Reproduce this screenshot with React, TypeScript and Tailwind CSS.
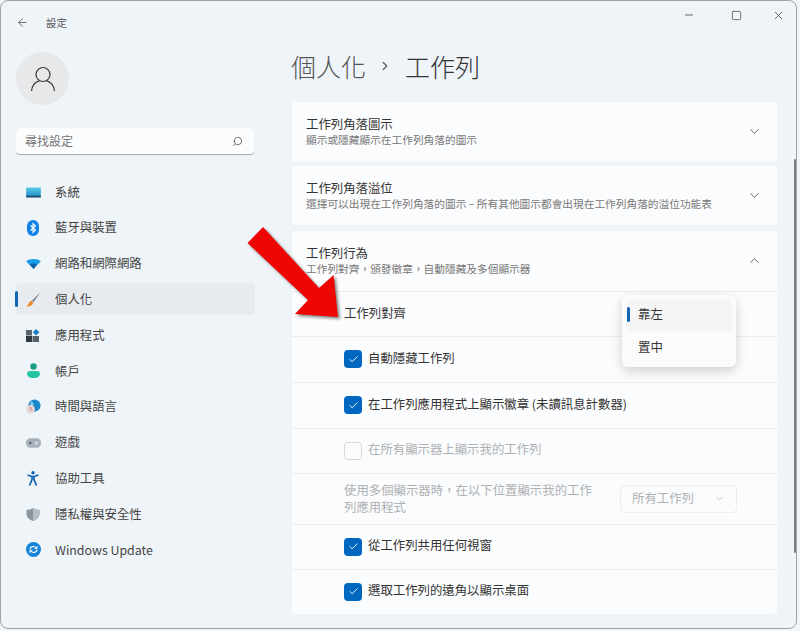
import { ChevronDown, ChevronRight, ChevronUp, Minus, Square, X, ArrowLeft, Search, Check } from "lucide-react";
import type { ReactNode } from "react";

const cjk = "font-['Noto_Sans_CJK_TC','Noto_Sans',sans-serif]";

function SystemIcon() {
  return (
    <svg viewBox="0 0 16 12" className="h-[11px] w-[15px]">
      <defs>
        <linearGradient id="sys" x1="0" y1="0" x2="0" y2="1">
          <stop offset="0%" stopColor="#5ecbea" />
          <stop offset="100%" stopColor="#1a8fc4" />
        </linearGradient>
      </defs>
      <rect x="0" y="0.5" width="16" height="10" fill="url(#sys)" />
      <rect x="0" y="9.5" width="16" height="2" fill="#1d4f73" />
    </svg>
  );
}

function BluetoothIcon() {
  return (
    <svg viewBox="0 0 14 16" className="h-[16px] w-[14px]">
      <rect x="1" y="0" width="12" height="16" rx="6" fill="#0f80e6" />
      <path d="M4.5 5.5 9.5 10 7 12.5V3.5L9.5 6 4.5 10.5" fill="none" stroke="#fff" strokeWidth="1.1" />
    </svg>
  );
}

function WifiIcon() {
  return (
    <svg viewBox="0 0 16 12" className="h-[11px] w-[15px]">
      <path d="M0 3.5C4 .3 12 .3 16 3.5L8 12Z" fill="#1a9be6" />
      <path d="M4.2 7C6.2 5.6 9.8 5.6 11.8 7L8 12Z" fill="#0b5fa8" />
    </svg>
  );
}

function BrushIcon() {
  return (
    <svg viewBox="0 0 14 14" className="h-[15px] w-[15px]">
      <path d="M13.5 .5 5.5 8 7 9.5Z" fill="#7a8690" />
      <path d="M5 8.2C3 8.5 3 11 .5 13.5 3.5 13.5 6.5 12.5 6.8 10Z" fill="#ef8a2c" />
    </svg>
  );
}

function AppsIcon() {
  return (
    <svg viewBox="0 0 14 13" className="h-[13px] w-[14px]">
      <rect x="0" y="1" width="6" height="5.5" fill="#5c6670" />
      <rect x="0" y="7" width="6" height="6" fill="#2e3640" />
      <rect x="6.5" y="7" width="6.5" height="6" fill="#59626b" />
      <path d="M10 0 13.5 3.3 10 6.6 6.8 3.3Z" fill="#1f7fc4" />
    </svg>
  );
}

function AccountIcon() {
  return (
    <svg viewBox="0 0 12 14" className="h-[15px] w-[13px]">
      <circle cx="6" cy="3.2" r="3" fill="#1b9e84" />
      <path d="M0 10C0 8 1.5 7.4 3 7.4H9C10.5 7.4 12 8 12 10 12 12.5 9.5 14 6 14S0 12.5 0 10Z" fill="#25c2a0" />
    </svg>
  );
}

function TimeIcon() {
  return (
    <svg viewBox="0 0 16 16" className="h-[15px] w-[15px]">
      <circle cx="9" cy="7" r="6.5" fill="#1b86c9" />
      <path d="M5 2.5C8 3 9 6 7 8 5 9 4 6 5 2.5Z" fill="#7ad0ee" />
      <circle cx="5" cy="11" r="4.5" fill="#e6d4d6" />
      <path d="M5 8.5V11L6.5 12" stroke="#b0606a" fill="none" strokeWidth="0.8" />
    </svg>
  );
}

function GamingIcon() {
  return (
    <svg viewBox="0 0 16 10" className="h-[10px] w-[15px]">
      <rect x="0" y="0" width="16" height="10" rx="4.5" fill="#a5b0ba" />
      <circle cx="4.5" cy="5" r="1.3" fill="#55626e" />
      <circle cx="11" cy="5" r="2" fill="#c9d2da" />
    </svg>
  );
}

function AccessIcon() {
  return (
    <svg viewBox="0 0 12 15" className="h-[15px] w-[12px]">
      <circle cx="6" cy="1.8" r="1.7" fill="#0f63b5" />
      <path d="M.5 4 5 5.5V8.5L2.5 14.5M11.5 4 7 5.5V8.5L9.5 14.5M5 5.5H7" fill="none" stroke="#0f63b5" strokeWidth="1.7" />
    </svg>
  );
}

function ShieldIcon() {
  return (
    <svg viewBox="0 0 14 14" className="h-[13px] w-[14px]">
      <path d="M7 0C9 1.3 11.5 2 14 2V6C14 10 11 12.7 7 14 3 12.7 0 10 0 6V2C2.5 2 5 1.3 7 0Z" fill="#8c969e" />
      <path d="M7 0C9 1.3 11.5 2 14 2V6C14 10 11 12.7 7 14Z" fill="#b6bec5" />
    </svg>
  );
}

function UpdateIcon() {
  return (
    <svg viewBox="0 0 16 16" className="h-[15px] w-[15px]">
      <circle cx="8" cy="8" r="8" fill="#1583d8" />
      <path d="M4 7.5C4.5 5 8.5 3.5 11 6.5M12 8.5C11.5 11 7.5 12.5 5 9.5" fill="none" stroke="#fff" strokeWidth="1.2" />
      <path d="M11.8 4.5V7.2H9.2M4.2 11.5V8.8H6.8" fill="none" stroke="#fff" strokeWidth="1" />
    </svg>
  );
}

const navItems = [
  { label: "系統", icon: <SystemIcon /> },
  { label: "藍牙與裝置", icon: <BluetoothIcon /> },
  { label: "網路和網際網路", icon: <WifiIcon /> },
  { label: "個人化", icon: <BrushIcon />, active: true },
  { label: "應用程式", icon: <AppsIcon /> },
  { label: "帳戶", icon: <AccountIcon /> },
  { label: "時間與語言", icon: <TimeIcon /> },
  { label: "遊戲", icon: <GamingIcon /> },
  { label: "協助工具", icon: <AccessIcon /> },
  { label: "隱私權與安全性", icon: <ShieldIcon /> },
  { label: "Windows Update", icon: <UpdateIcon /> },
];

function Sidebar() {
  return (
    <aside className="flex w-[270px] shrink-0 flex-col px-[15px]">
      <div className="flex h-[41px] items-center pt-[2px] text-[#555]">
        <ArrowLeft className="size-[13px]" strokeWidth={1.5} />
        <span className="ml-[17px] text-[10.5px]">設定</span>
      </div>
      <div className="mt-[10px] flex size-[53px] items-center justify-center rounded-full bg-[#e6e8ea]">
        <svg viewBox="0 0 26 26" fill="none" stroke="#3a3a3a" strokeWidth="1.2" className="size-[26px]">
          <circle cx="13" cy="8.5" r="7" />
          <path d="M1.5 25C2 19.5 5.5 16 9.5 14.6M24.5 25C24 19.5 20.5 16 16.5 14.6" />
        </svg>
      </div>
      <div className="mt-[23px] flex h-[27px] w-[238px] items-center justify-between rounded-[4px] border-b border-[#a8afb5] bg-[#fbfcfd] pl-[9px] pr-[11px] shadow-[0_0_1px_rgba(0,0,0,0.15)]">
        <span className="text-[12px] text-[#777]">尋找設定</span>
        <Search className="size-[11px] -scale-x-100 text-[#444]" strokeWidth={1.6} />
      </div>
      <nav className="mt-[21px] flex w-[239px] flex-col gap-[3.8px]">
        {navItems.map((item) => (
          <div
            key={item.label}
            className={`relative flex h-[32px] items-center rounded-[4px] ${item.active ? "bg-[#e7ebef]" : ""}`}
          >
            {item.active && <span className="absolute -left-px h-[16px] w-[3px] rounded-full bg-[#0f67b5]" />}
            <span className="flex w-[34px] justify-center">{item.icon}</span>
            <span className="ml-[5px] text-[12.4px] text-[#444]">{item.label}</span>
          </div>
        ))}
      </nav>
    </aside>
  );
}

function CardHeader({ title, desc, open, height }: { title: string; desc: string; open?: boolean; height: string }) {
  return (
    <div className={`flex items-center justify-between pl-[14px] pr-[15px] ${height}`}>
      <div className="flex flex-col">
        <span className="text-[12.4px] leading-[15px] text-[#333]">{title}</span>
        <span className="mt-px text-[10.7px] leading-[13px] text-[#777]">{desc}</span>
      </div>
      {open ? (
        <ChevronUp className="size-[15px] text-[#555]" strokeWidth={1.4} />
      ) : (
        <ChevronDown className="size-[15px] text-[#555]" strokeWidth={1.4} />
      )}
    </div>
  );
}

function CheckBox({ checked, disabled }: { checked?: boolean; disabled?: boolean }) {
  if (checked) {
    return (
      <span className="flex size-[18px] items-center justify-center rounded-[4px] bg-[#0067c0]">
        <Check className="size-[11px] text-white" strokeWidth={2} />
      </span>
    );
  }
  return <span className={`size-[18px] rounded-[4px] border ${disabled ? "border-[#d5d8da]" : "border-[#888]"} bg-[#fbfcfd]`} />;
}

function Row({ height, children }: { height: string; children: ReactNode }) {
  return <div className={`flex items-center border-t border-[#eaecee] pl-[52px] ${height}`}>{children}</div>;
}

function CheckRow({ label, checked, disabled, height }: { label: string; checked?: boolean; disabled?: boolean; height: string }) {
  return (
    <Row height={height}>
      <CheckBox checked={checked} disabled={disabled} />
      <span className={`mb-[2px] ml-[6px] text-[12.4px] ${disabled ? "text-[#aeb1b4]" : "text-[#333]"}`}>{label}</span>
    </Row>
  );
}

export default function App() {
  return (
    <div className={`relative h-[631px] w-[800px] overflow-hidden bg-[#f3f4f5] ${cjk}`}>
      <div className="flex h-[629px] w-[797px] overflow-hidden rounded-[8px] border border-[#9ba4ab] bg-[#eff4f9]">
        <Sidebar />
        <main className="flex min-w-0 flex-1 flex-col">
          <div className="flex h-[28px] items-center justify-end text-[#444]">
            <Minus className="mr-[36px] size-[12px]" strokeWidth={1.6} />
            <Square className="mr-[30px] size-[11px]" strokeWidth={1.6} />
            <X className="mr-[11px] size-[13px]" strokeWidth={1.4} />
          </div>
          <h1 className="ml-[20px] mt-[19px] flex h-[36px] items-center text-[25px] font-light leading-none text-[#555]">
            個人化
            <ChevronRight className="mx-[12px] size-[14px]" strokeWidth={2} />
            <span className="ml-[1px] text-[#333]">工作列</span>
          </h1>
          <div className="ml-[21px] mt-[17.5px] flex w-[485px] flex-col gap-[5.5px]">
            <section className="rounded-[4px] bg-[#fbfcfd]">
              <CardHeader height="h-[59px]" title="工作列角落圖示" desc="顯示或隱藏顯示在工作列角落的圖示" />
            </section>
            <section className="rounded-[4px] bg-[#fbfcfd]">
              <CardHeader
                height="h-[59px]"
                title="工作列角落溢位"
                desc="選擇可以出現在工作列角落的圖示 – 所有其他圖示都會出現在工作列角落的溢位功能表"
              />
            </section>
            <section className="rounded-[4px] bg-[#fbfcfd]">
              <CardHeader height="h-[60px]" title="工作列行為" desc={"工作列對齊\uFF0C頒發徽章\uFF0C自動隱藏及多個顯示器"} open />
              <Row height="h-[45px]">
                <span className="text-[12.4px] text-[#333]">工作列對齊</span>
              </Row>
              <CheckRow height="h-[46px]" label="自動隱藏工作列" checked />
              <CheckRow height="h-[46px]" label="在工作列應用程式上顯示徽章 (未讀訊息計數器)" checked />
              <CheckRow height="h-[45px]" label="在所有顯示器上顯示我的工作列" disabled />
              <Row height="h-[51px]">
                <span className="w-[252px] text-[12.4px] leading-[17px] text-[#aeb1b4]">
                  {"使用多個顯示器時\uFF0C在以下位置顯示我的工作列應用程式"}
                </span>
                <div className="ml-[24px] flex h-[28px] w-[117px] items-center justify-between rounded-[4px] border border-[#eceef0] pl-[11px] pr-[11px] text-[#aeb1b4]">
                  <span className="text-[12.4px]">所有工作列</span>
                  <ChevronDown className="size-[11px]" strokeWidth={1.5} />
                </div>
              </Row>
              <CheckRow height="h-[45px]" label="從工作列共用任何視窗" checked />
              <CheckRow height="h-[45px]" label="選取工作列的遠角以顯示桌面" checked />
            </section>
          </div>
        </main>
      </div>

      <div className="absolute left-[794px] top-[159px] h-[394px] w-[2px] rounded-full bg-[#7c7f82]" />

      <div className="absolute left-[622px] top-[295px] flex h-[72px] w-[114px] flex-col gap-[1px] rounded-[6px] bg-[#fbfbfb] p-[4px] shadow-[0_4px_12px_rgba(0,0,0,0.18)]">
        <div className="relative flex h-[32px] items-center rounded-[4px] bg-[#f5f5f5] pl-[12px]">
          <span className="absolute left-[1px] h-[15px] w-[3px] rounded-full bg-[#0f67b5]" />
          <span className="text-[12.4px] text-[#333]">靠左</span>
        </div>
        <div className="flex h-[32px] items-center pl-[12px]">
          <span className="text-[12.4px] text-[#333]">置中</span>
        </div>
      </div>

      <svg viewBox="0 0 100 100" className="absolute left-[245px] top-[225px] h-[100px] w-[100px]">
        <polygon className="blur-[1.5px]" points="2.5,18 18,2 74,63 88.6,50 93,92 50,89 63,75" fill="#333" opacity="0.6" transform="translate(2 2)" />
        <polygon points="2.5,18 18,2 74,63 88.6,50 93,92 50,89 63,75" fill="#f00505" />
      </svg>
    </div>
  );
}
